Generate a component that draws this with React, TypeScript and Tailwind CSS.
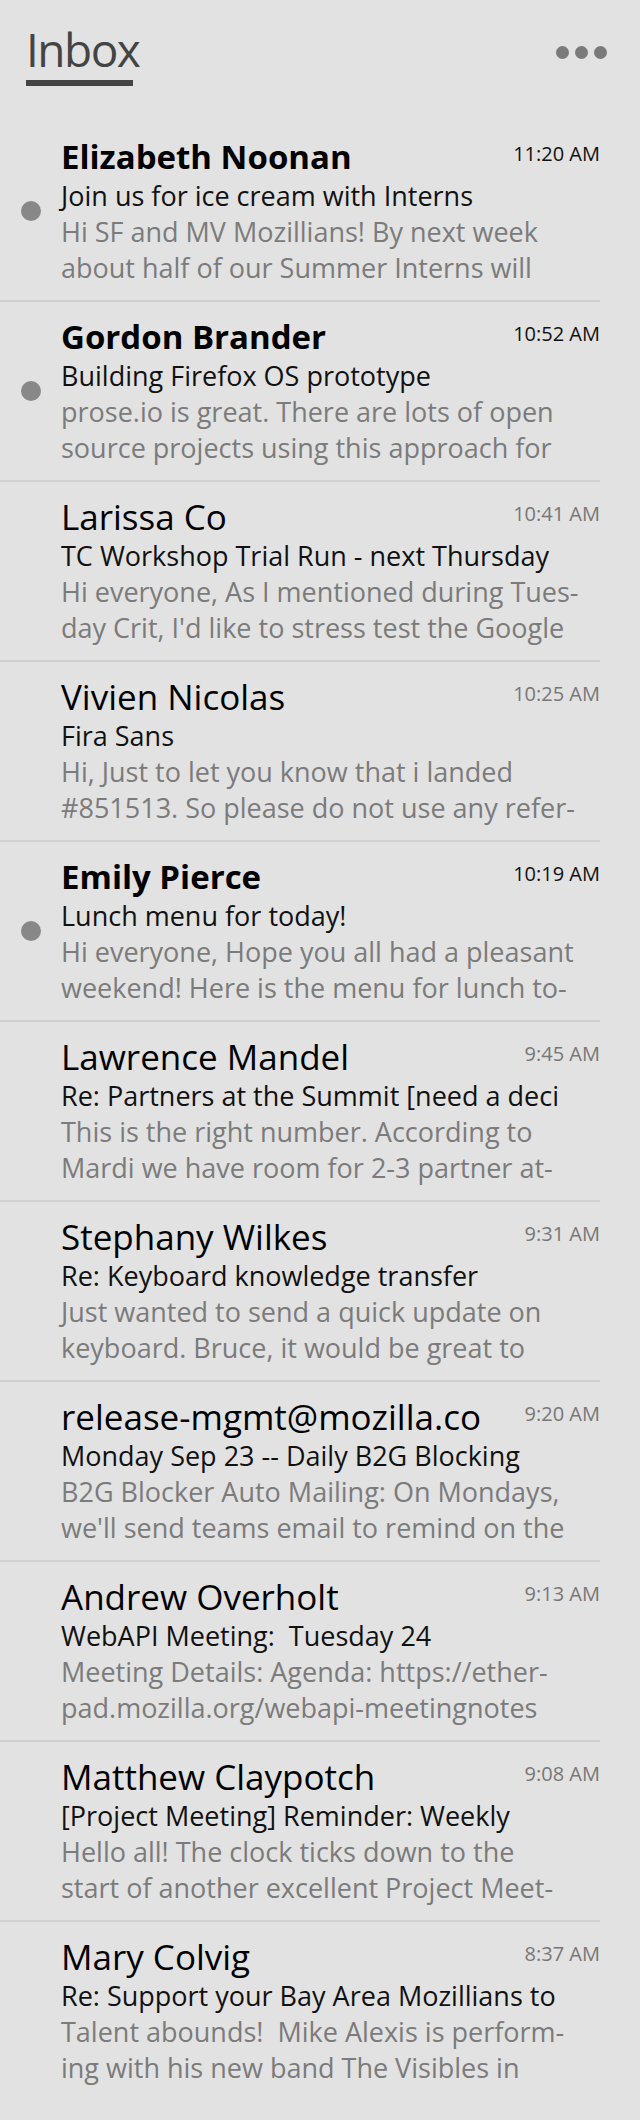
import React from "react";

type Message = {
  from: string;
  time: string;
  subject: string;
  preview: [string, string];
  unread?: boolean;
};

const messages: Message[] = [
  {
    from: "Elizabeth Noonan",
    time: "11:20 AM",
    subject: "Join us for ice cream with Interns",
    preview: ["Hi SF and MV Mozillians! By next week", "about half of our Summer Interns will"],
    unread: true,
  },
  {
    from: "Gordon Brander",
    time: "10:52 AM",
    subject: "Building Firefox OS prototype",
    preview: ["prose.io is great. There are lots of open", "source projects using this approach for"],
    unread: true,
  },
  {
    from: "Larissa Co",
    time: "10:41 AM",
    subject: "TC Workshop Trial Run - next Thursday",
    preview: ["Hi everyone, As I mentioned during Tues-", "day Crit, I'd like to stress test the Google"],
  },
  {
    from: "Vivien Nicolas",
    time: "10:25 AM",
    subject: "Fira Sans",
    preview: ["Hi, Just to let you know that i landed", "#851513. So please do not use any refer-"],
  },
  {
    from: "Emily Pierce",
    time: "10:19 AM",
    subject: "Lunch menu for today!",
    preview: ["Hi everyone, Hope you all had a pleasant", "weekend! Here is the menu for lunch to-"],
    unread: true,
  },
  {
    from: "Lawrence Mandel",
    time: "9:45 AM",
    subject: "Re: Partners at the Summit [need a deci",
    preview: ["This is the right number. According to", "Mardi we have room for 2-3 partner at-"],
  },
  {
    from: "Stephany Wilkes",
    time: "9:31 AM",
    subject: "Re: Keyboard knowledge transfer",
    preview: ["Just wanted to send a quick update on", "keyboard. Bruce, it would be great to"],
  },
  {
    from: "release-mgmt@mozilla.co",
    time: "9:20 AM",
    subject: "Monday Sep 23 -- Daily B2G Blocking",
    preview: ["B2G Blocker Auto Mailing: On Mondays,", "we'll send teams email to remind on the"],
  },
  {
    from: "Andrew Overholt",
    time: "9:13 AM",
    subject: "WebAPI Meeting:\u00a0 Tuesday 24",
    preview: ["Meeting Details: Agenda: https://ether-", "pad.mozilla.org/webapi-meetingnotes"],
  },
  {
    from: "Matthew Claypotch",
    time: "9:08 AM",
    subject: "[Project Meeting] Reminder: Weekly",
    preview: ["Hello all! The clock ticks down to the", "start of another excellent Project Meet-"],
  },
  {
    from: "Mary Colvig",
    time: "8:37 AM",
    subject: "Re: Support your Bay Area Mozillians to",
    preview: ["Talent abounds!\u00a0 Mike Alexis is perform-", "ing with his new band The Visibles in"],
  },
];

const MessageRow: React.FC<{ msg: Message; last: boolean }> = ({ msg, last }) => {
  return (
    <li className={`flex h-[180px] w-[600px] ${last ? "" : "border-b-2 border-[#d0d0d0]"}`}>
      {/* unread marker */}
      <div className="flex w-[61px] shrink-0 items-center justify-center">
        {msg.unread && <span className="block h-5 w-5 rounded-full bg-[#888888]" />}
      </div>

      <div className="min-w-0 flex-1 pt-[13px]">
        <div className="flex h-[43px] items-start gap-3">
          <p
            className={`min-w-0 flex-1 whitespace-nowrap leading-[44px] text-black ${
              msg.unread ? "text-[33px] font-bold" : "text-[35px] font-normal"
            }`}
          >
            {msg.from}
          </p>
          <span
            className={`-mt-[3px] shrink-0 text-[20px] leading-[44px] ${
              msg.unread ? "text-[#111111]" : "text-[#777777]"
            }`}
          >
            {msg.time}
          </span>
        </div>
        <p className="whitespace-nowrap text-[27px] leading-[36px] text-[#111111]">{msg.subject}</p>
        <p className="whitespace-nowrap text-[27px] leading-[36px] text-[#7b7b7b]">{msg.preview[0]}</p>
        <p className="whitespace-nowrap text-[27px] leading-[36px] text-[#7b7b7b]">{msg.preview[1]}</p>
      </div>
    </li>
  );
};

export default function App() {
  return (
    <div className="min-h-[2120px] w-[640px] bg-[#e2e2e2] font-['Open_Sans',sans-serif]">
      {/* Header */}
      <header className="flex h-[122px] items-start justify-between pl-[26px] pr-[33px] pt-[18px]">
        <div>
          <h1 className="text-[46px] leading-[62px] tracking-[-1.5px] text-[#444444]">Inbox</h1>
          <div className="h-[6px] w-[107px] bg-[#444444]" />
        </div>
        <button className="mt-[28px] flex items-center gap-[6px]">
          <span className="block h-[13px] w-[13px] rounded-full bg-[#7a7a7a]" />
          <span className="block h-[13px] w-[13px] rounded-full bg-[#7a7a7a]" />
          <span className="block h-[13px] w-[13px] rounded-full bg-[#7a7a7a]" />
        </button>
      </header>

      {/* Message list */}
      <ul>
        {messages.map((m, i) => (
          <MessageRow key={m.from} msg={m} last={i === messages.length - 1} />
        ))}
      </ul>
    </div>
  );
}
